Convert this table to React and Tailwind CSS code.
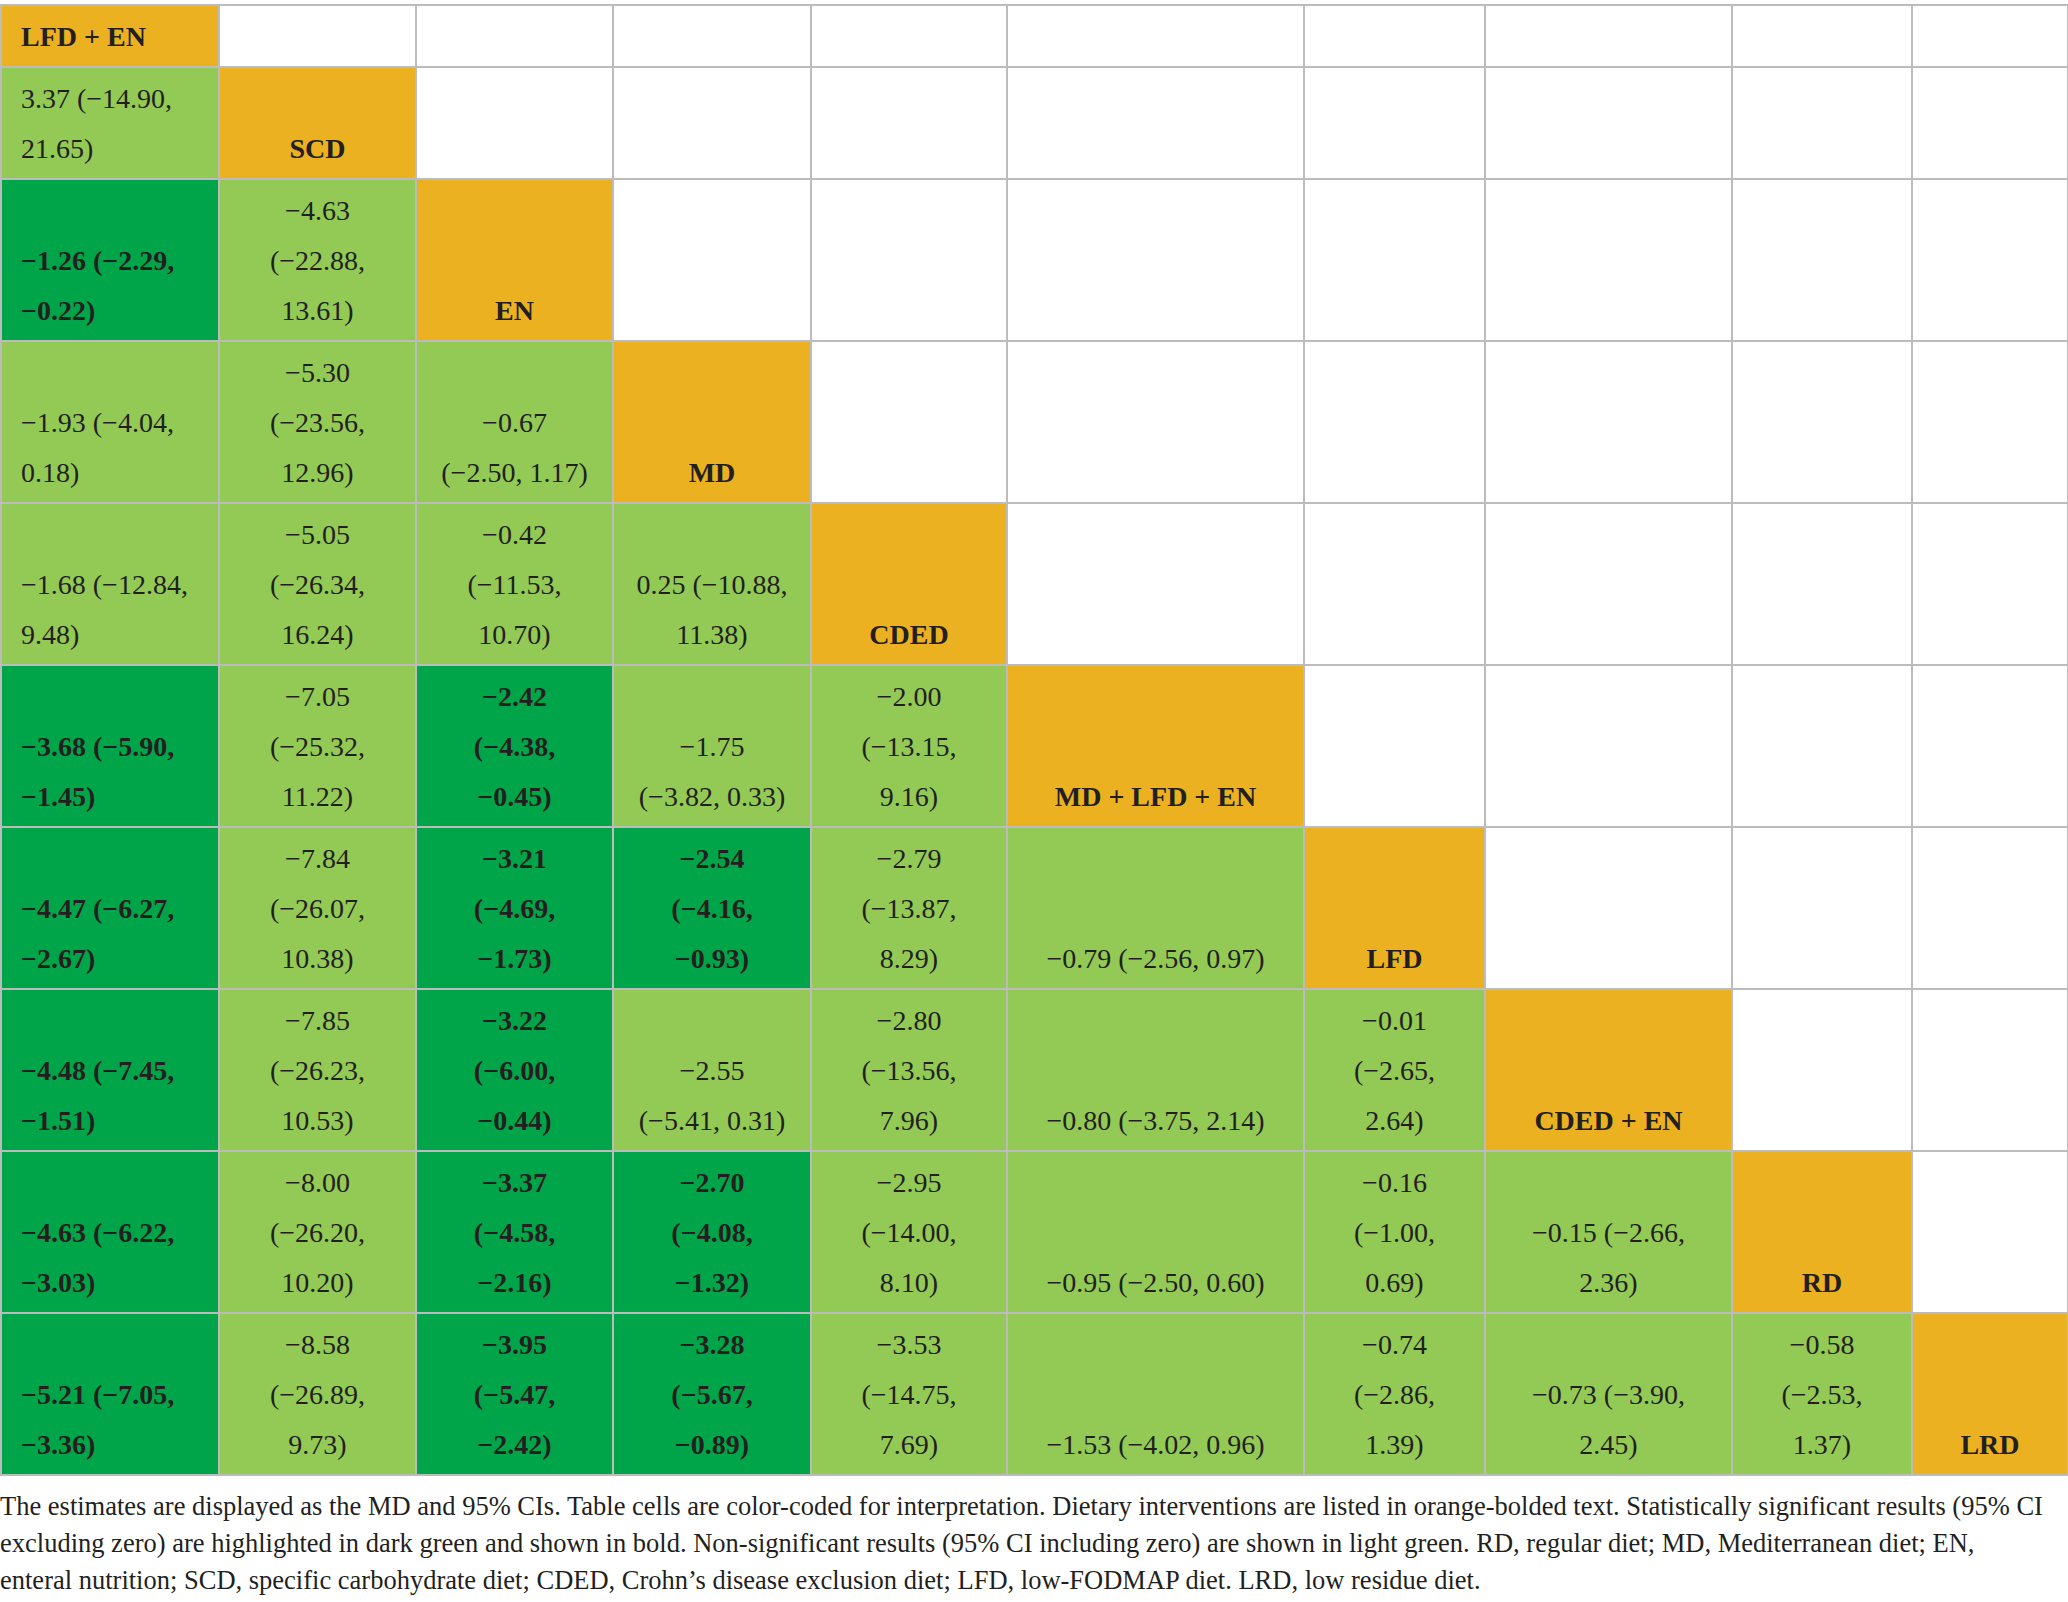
import React from 'react'

const O = 'bg-[#ebb120]'
const L = 'bg-[#93c955]'
const D = 'bg-[#00a549]'

// kind: o = diet label, l = not significant, d = significant
const rows = [
  [['o', 'LFD + EN']],
  [['l', '3.37 (−14.90,|21.65)'], ['o', 'SCD']],
  [['d', '−1.26 (−2.29,|−0.22)'], ['l', '−4.63|(−22.88,|13.61)'], ['o', 'EN']],
  [['l', '−1.93 (−4.04,|0.18)'], ['l', '−5.30|(−23.56,|12.96)'], ['l', '−0.67|(−2.50, 1.17)'], ['o', 'MD']],
  [['l', '−1.68 (−12.84,|9.48)'], ['l', '−5.05|(−26.34,|16.24)'], ['l', '−0.42|(−11.53,|10.70)'], ['l', '0.25 (−10.88,|11.38)'], ['o', 'CDED']],
  [['d', '−3.68 (−5.90,|−1.45)'], ['l', '−7.05|(−25.32,|11.22)'], ['d', '−2.42|(−4.38,|−0.45)'], ['l', '−1.75|(−3.82, 0.33)'], ['l', '−2.00|(−13.15,|9.16)'], ['o', 'MD + LFD + EN']],
  [['d', '−4.47 (−6.27,|−2.67)'], ['l', '−7.84|(−26.07,|10.38)'], ['d', '−3.21|(−4.69,|−1.73)'], ['d', '−2.54|(−4.16,|−0.93)'], ['l', '−2.79|(−13.87,|8.29)'], ['l', '−0.79 (−2.56, 0.97)'], ['o', 'LFD']],
  [['d', '−4.48 (−7.45,|−1.51)'], ['l', '−7.85|(−26.23,|10.53)'], ['d', '−3.22|(−6.00,|−0.44)'], ['l', '−2.55|(−5.41, 0.31)'], ['l', '−2.80|(−13.56,|7.96)'], ['l', '−0.80 (−3.75, 2.14)'], ['l', '−0.01|(−2.65,|2.64)'], ['o', 'CDED + EN']],
  [['d', '−4.63 (−6.22,|−3.03)'], ['l', '−8.00|(−26.20,|10.20)'], ['d', '−3.37|(−4.58,|−2.16)'], ['d', '−2.70|(−4.08,|−1.32)'], ['l', '−2.95|(−14.00,|8.10)'], ['l', '−0.95 (−2.50, 0.60)'], ['l', '−0.16|(−1.00,|0.69)'], ['l', '−0.15 (−2.66,|2.36)'], ['o', 'RD']],
  [['d', '−5.21 (−7.05,|−3.36)'], ['l', '−8.58|(−26.89,|9.73)'], ['d', '−3.95|(−5.47,|−2.42)'], ['d', '−3.28|(−5.67,|−0.89)'], ['l', '−3.53|(−14.75,|7.69)'], ['l', '−1.53 (−4.02, 0.96)'], ['l', '−0.74|(−2.86,|1.39)'], ['l', '−0.73 (−3.90,|2.45)'], ['l', '−0.58|(−2.53,|1.37)'], ['o', 'LRD']],
]

const widths = ['w-[218px]', 'w-[197px]', 'w-[197px]', 'w-[198px]', 'w-[196px]', 'w-[297px]', 'w-[181px]', 'w-[247px]', 'w-[180px]', 'w-[156px]']
const heights = ['h-[62px]', 'h-[112px]', 'h-[162px]', 'h-[162px]', 'h-[162px]', 'h-[162px]', 'h-[162px]', 'h-[162px]', 'h-[162px]', 'h-[162px]']

const Cell = ({ cell, col }) => {
  const base = `border-2 border-[#bcbcbc] align-bottom pb-[4px] whitespace-nowrap ${col === 0 ? 'text-left pl-[19px]' : 'text-center'}`
  if (!cell) return <td className={`${base} bg-white`} />
  const [kind, text] = cell
  const bg = kind === 'o' ? O : kind === 'd' ? D : L
  const weight = kind === 'l' ? 'font-normal' : 'font-bold'
  const lines = text.split('|')
  return (
    <td className={`${base} ${bg} ${weight}`}>
      {lines.map((line, i) => (
        <div key={i}>{line}</div>
      ))}
    </td>
  )
}

export default function App() {
  return (
    <div className="w-[2068px] min-h-[1602px] bg-white pt-[4px] text-[#231f20] font-['Liberation_Serif',serif]">
      <table className="w-[2067px] table-fixed border-collapse text-[28px] leading-[50px]">
        <colgroup>
          {widths.map((w, i) => (
            <col key={i} className={w} />
          ))}
        </colgroup>
        <tbody>
          {rows.map((row, r) => (
            <tr key={r} className={heights[r]}>
              {widths.map((_, c) => (
                <Cell key={c} cell={row[c]} col={c} />
              ))}
            </tr>
          ))}
        </tbody>
      </table>

      <p className="mt-[12px] text-[26.5px] leading-[37px] whitespace-nowrap">
        The estimates are displayed as the MD and 95% CIs. Table cells are color-coded for interpretation. Dietary interventions are listed in orange-bolded text. Statistically significant results (95% CI
        <br />
        excluding zero) are highlighted in dark green and shown in bold. Non-significant results (95% CI including zero) are shown in light green. RD, regular diet; MD, Mediterranean diet; EN,
        <br />
        enteral nutrition; SCD, specific carbohydrate diet; CDED, Crohn’s disease exclusion diet; LFD, low-FODMAP diet. LRD, low residue diet.
      </p>
    </div>
  )
}
